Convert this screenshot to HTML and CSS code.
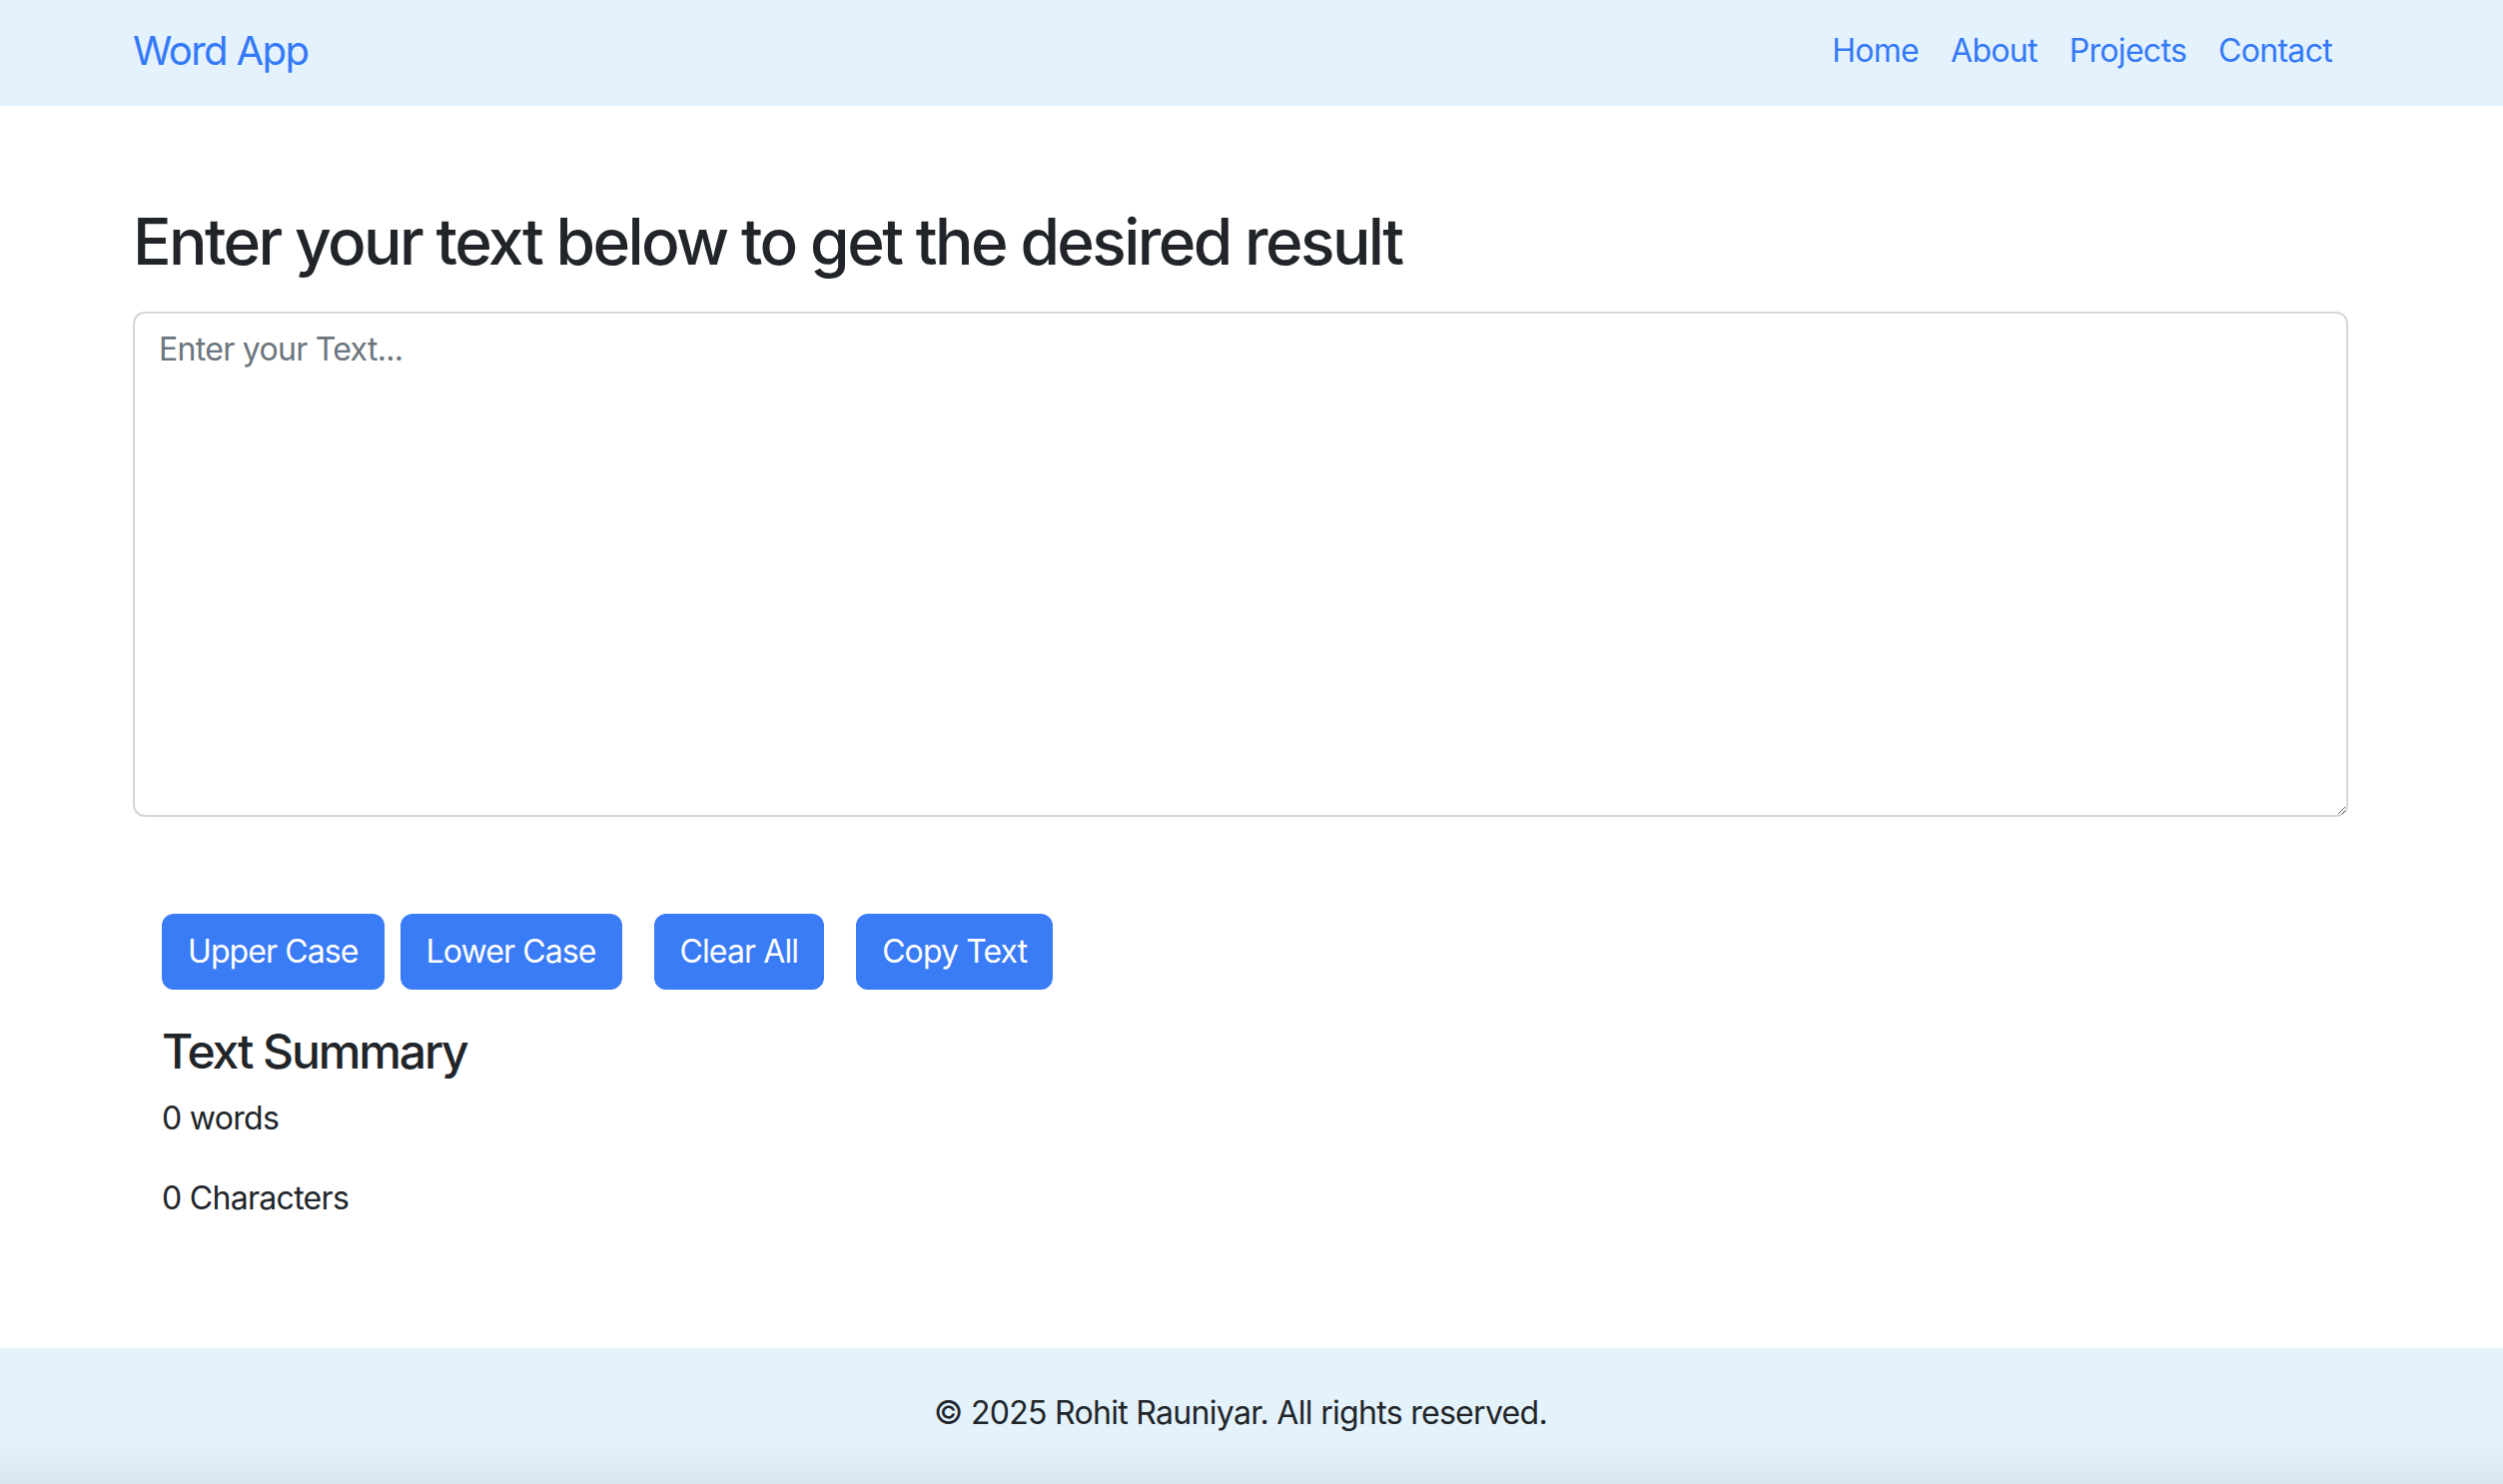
FILE: index.html
```html
<!DOCTYPE html>
<html lang="en">
<head>
<meta charset="utf-8">
<title>Word App</title>
<link rel="stylesheet" href="styles.css">
</head>
<body>
<nav class="navbar">
  <div class="container nav-inner">
    <a class="brand" href="#">Word App</a>
    <ul class="nav-links">
      <li><a href="#">Home</a></li>
      <li><a href="#">About</a></li>
      <li><a href="#">Projects</a></li>
      <li><a href="#">Contact</a></li>
    </ul>
  </div>
</nav>
<main class="container main">
  <h1 class="title">Enter your text below to get the desired result</h1>
  <textarea class="text-input" placeholder="Enter your Text..."></textarea>
  <div class="inner">
    <div class="actions">
      <button class="btn btn-upper">Upper Case</button>
      <button class="btn btn-lower">Lower Case</button>
      <button class="btn btn-clear">Clear All</button>
      <button class="btn btn-copy">Copy Text</button>
    </div>
    <h2 class="summary-title">Text Summary</h2>
    <p class="stat">0 words</p>
    <p class="stat">0 Characters</p>
  </div>
</main>
<footer class="footer">
  <div class="container footer-inner">© 2025 Rohit Rauniyar. All rights reserved.</div>
</footer>
</body>
</html>
```
FILE: styles.css
```css
* { box-sizing: border-box; }
html, body { margin: 0; padding: 0; }
body {
  font-family: Inter, "Noto Sans", "Liberation Sans", sans-serif;
  font-size: 32px;
  line-height: 48px;
  letter-spacing: -0.7px;
  color: #212529;
  background: #ffffff;
}
.container {
  width: 2218px;
  margin-left: 133px;
}
.navbar {
  height: 106px;
  background: #e3f2fd;
  padding-bottom: 5px;
  display: flex;
  align-items: center;
}
.nav-inner {
  display: flex;
  align-items: center;
  justify-content: space-between;
}
.brand {
  font-size: 40px;
  line-height: 60px;
  letter-spacing: -1.6px;
  color: #3479f6;
  text-decoration: none;
}
.nav-links {
  list-style: none;
  margin: 0;
  padding: 0;
  display: flex;
}
.nav-links a {
  display: block;
  padding: 0 16px;
  color: #3479f6;
  text-decoration: none;
  font-size: 32px;
  line-height: 48px;
}
.main {
  padding-top: 98px;
}
.title {
  margin: 0 0 31px;
  font-size: 64px;
  line-height: 76.8px;
  font-weight: 500;
  letter-spacing: -2.6px;
  color: #212529;
}
.text-input {
  display: block;
  width: 100%;
  height: 506px;
  padding: 12px 24px;
  border: 2px solid #d3d7db;
  border-radius: 12px;
  font-family: inherit;
  font-size: 32px;
  line-height: 48px;
  letter-spacing: -0.7px;
  color: #212529;
  background: #fff;
  resize: vertical;
  outline: none;
}
.text-input::placeholder { color: #6c757d; opacity: 1; }
.inner {
  padding-left: 29px;
  padding-top: 97px;
}
.actions {
  display: flex;
  align-items: center;
}
.btn {
  font-family: inherit;
  font-size: 32px;
  line-height: 48px;
  letter-spacing: -0.9px;
  padding: 12px 24px;
  border: 2px solid #3a7bf6;
  border-radius: 12px;
  background: #3a7bf6;
  color: #ffffff;
  cursor: pointer;
}
.btn-lower { margin-left: 16px; }
.btn-clear { margin-left: 32px; }
.btn-copy { margin-left: 32px; }
.summary-title {
  margin: 33px 0 15px;
  font-size: 48px;
  line-height: 57.6px;
  font-weight: 500;
  letter-spacing: -2.1px;
}
.stat {
  margin: 0 0 32px;
}
.footer {
  margin-top: 126px;
  padding: 41px 0 47px;
  background: linear-gradient(to bottom, #e4f2fc 0, #e4f2fc 92px, #d9e5ef 136px);
}
.footer-inner {
  text-align: center;
}
```
